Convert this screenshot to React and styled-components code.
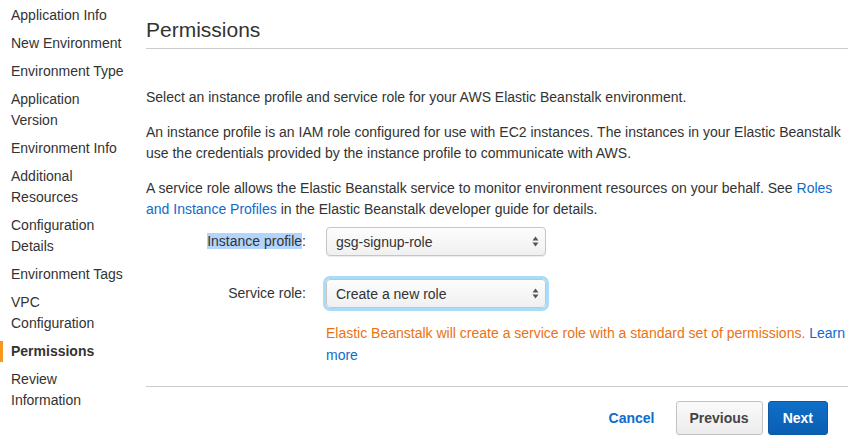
import styled, { createGlobalStyle } from "styled-components";

const GlobalStyle = createGlobalStyle`
    html, body {
        margin: 0;
        padding: 0;
        background: #fff;
    }
    body {
        font-family: "Liberation Sans", Arial, sans-serif;
        color: #333;
        font-size: 14px;
    }
`

const steps = [
    "Application Info",
    "New Environment",
    "Environment Type",
    "Application Version",
    "Environment Info",
    "Additional Resources",
    "Configuration Details",
    "Environment Tags",
    "VPC Configuration",
    "Permissions",
    "Review Information",
]

function Arrows(){
    return (
        <svg width="7" height="11" viewBox="0 0 7 11">
            <path d="M3.5 0.5 L6.5 4.5 L0.5 4.5 Z" fill="#555" />
            <path d="M3.5 10.5 L6.5 6.5 L0.5 6.5 Z" fill="#555" />
        </svg>
    )
}

export default function App(){
    return (
        <Page>
            <GlobalStyle />
            <Sidebar>
                {steps.map(step => (
                    <Step key={step} active={step === "Permissions"}>{step}</Step>
                ))}
            </Sidebar>
            <Main>
                <Title>Permissions</Title>
                <Text>Select an instance profile and service role for your AWS Elastic Beanstalk environment.</Text>
                <Text>An instance profile is an IAM role configured for use with EC2 instances. The instances in your Elastic Beanstalk use the credentials provided by the instance profile to communicate with AWS.</Text>
                <Text>A service role allows the Elastic Beanstalk service to monitor environment resources on your behalf. See <Link>Roles and Instance Profiles</Link> in the Elastic Beanstalk developer guide for details.</Text>
                <Form>
                    <Label><Highlight>Instance profile</Highlight>:</Label>
                    <Select>
                        <span>gsg-signup-role</span>
                        <Arrows />
                    </Select>
                    <Label>Service role:</Label>
                    <Select focused>
                        <span>Create a new role</span>
                        <Arrows />
                    </Select>
                    <span />
                    <Notice>Elastic Beanstalk will create a service role with a standard set of permissions. <Link>Learn more</Link></Notice>
                </Form>
                <Footer>
                    <CancelLink>Cancel</CancelLink>
                    <Button>Previous</Button>
                    <Button primary>Next</Button>
                </Footer>
            </Main>
        </Page>
    )
}

const Page = styled.div`
    display: flex;
    width: 855px;
    height: 440px;
    overflow: hidden;
`
const Sidebar = styled.nav`
    display: flex;
    flex-direction: column;
    gap: 7px;
    width: 135px;
    padding-top: 5px;
    flex-shrink: 0;
`
const Step = styled.div`
    width: 114px;
    padding-left: 8px;
    font-size: 14px;
    line-height: 21px;
    color: #333;
    font-weight: ${props => props.active ? "bold" : "normal"};
    border-left: 3px solid ${props => props.active ? "#f7981d" : "transparent"};
`
const Main = styled.main`
    flex: 1;
    margin-left: 11px;
    margin-right: 7px;
    display: flex;
    flex-direction: column;
`
const Title = styled.h2`
    margin: 0 0 38px 0;
    padding-top: 17px;
    padding-bottom: 6px;
    font-size: 21px;
    font-weight: normal;
    line-height: 25px;
    color: #333;
    border-bottom: 1px solid #ccc;
`
const Text = styled.p`
    margin: 0 0 14px 0;
    font-size: 14px;
    line-height: 21px;
    color: #333;
`
const Link = styled.a`
    color: #0e6ccc;
    cursor: pointer;
`
const Form = styled.div`
    display: grid;
    grid-template-columns: 160px 220px;
    column-gap: 20px;
    row-gap: 23px;
    align-items: center;
    margin-top: -7px;
`
const Label = styled.div`
    text-align: right;
    font-size: 14px;
    line-height: 21px;
`
const Highlight = styled.span`
    background: #b3d4fc;
`
const Select = styled.div`
    display: flex;
    align-items: center;
    justify-content: space-between;
    height: 29px;
    box-sizing: border-box;
    padding: 0 6px 0 9px;
    border: 1px solid #c6c6c6;
    border-radius: 4px;
    background: linear-gradient(#fdfdfd, #f0f0f0);
    font-size: 14px;
    color: #333;
    box-shadow: ${props => props.focused ? "0 0 0 3px #a9dcf7" : "0 1px 1px rgba(0,0,0,0.08)"};
`
const Notice = styled.div`
    grid-column: 2 / span 1;
    width: 540px;
    margin-top: -9px;
    font-size: 14px;
    line-height: 22px;
    color: #ec7211;
`
const Footer = styled.div`
    margin-top: 20px;
    border-top: 1px solid #ccc;
    padding-top: 14px;
    display: flex;
    justify-content: flex-end;
    align-items: center;
    gap: 5px;
    padding-right: 20px;
`
const CancelLink = styled.a`
    color: #0e6ccc;
    font-weight: bold;
    font-size: 14px;
    margin-right: 16px;
    cursor: pointer;
`
const Button = styled.button`
    font-family: "Liberation Sans", Arial, sans-serif;
    font-size: 14px;
    font-weight: bold;
    height: 34px;
    padding: 0 ${props => props.primary ? "14px" : "13px"};
    border-radius: 3px;
    border: 1px solid ${props => props.primary ? "#0a5aa8" : "#c3c3c3"};
    background: ${props => props.primary ? "linear-gradient(#0f6fc6, #0a5fb3)" : "linear-gradient(#fafafa, #ececec)"};
    color: ${props => props.primary ? "#fff" : "#444"};
`
